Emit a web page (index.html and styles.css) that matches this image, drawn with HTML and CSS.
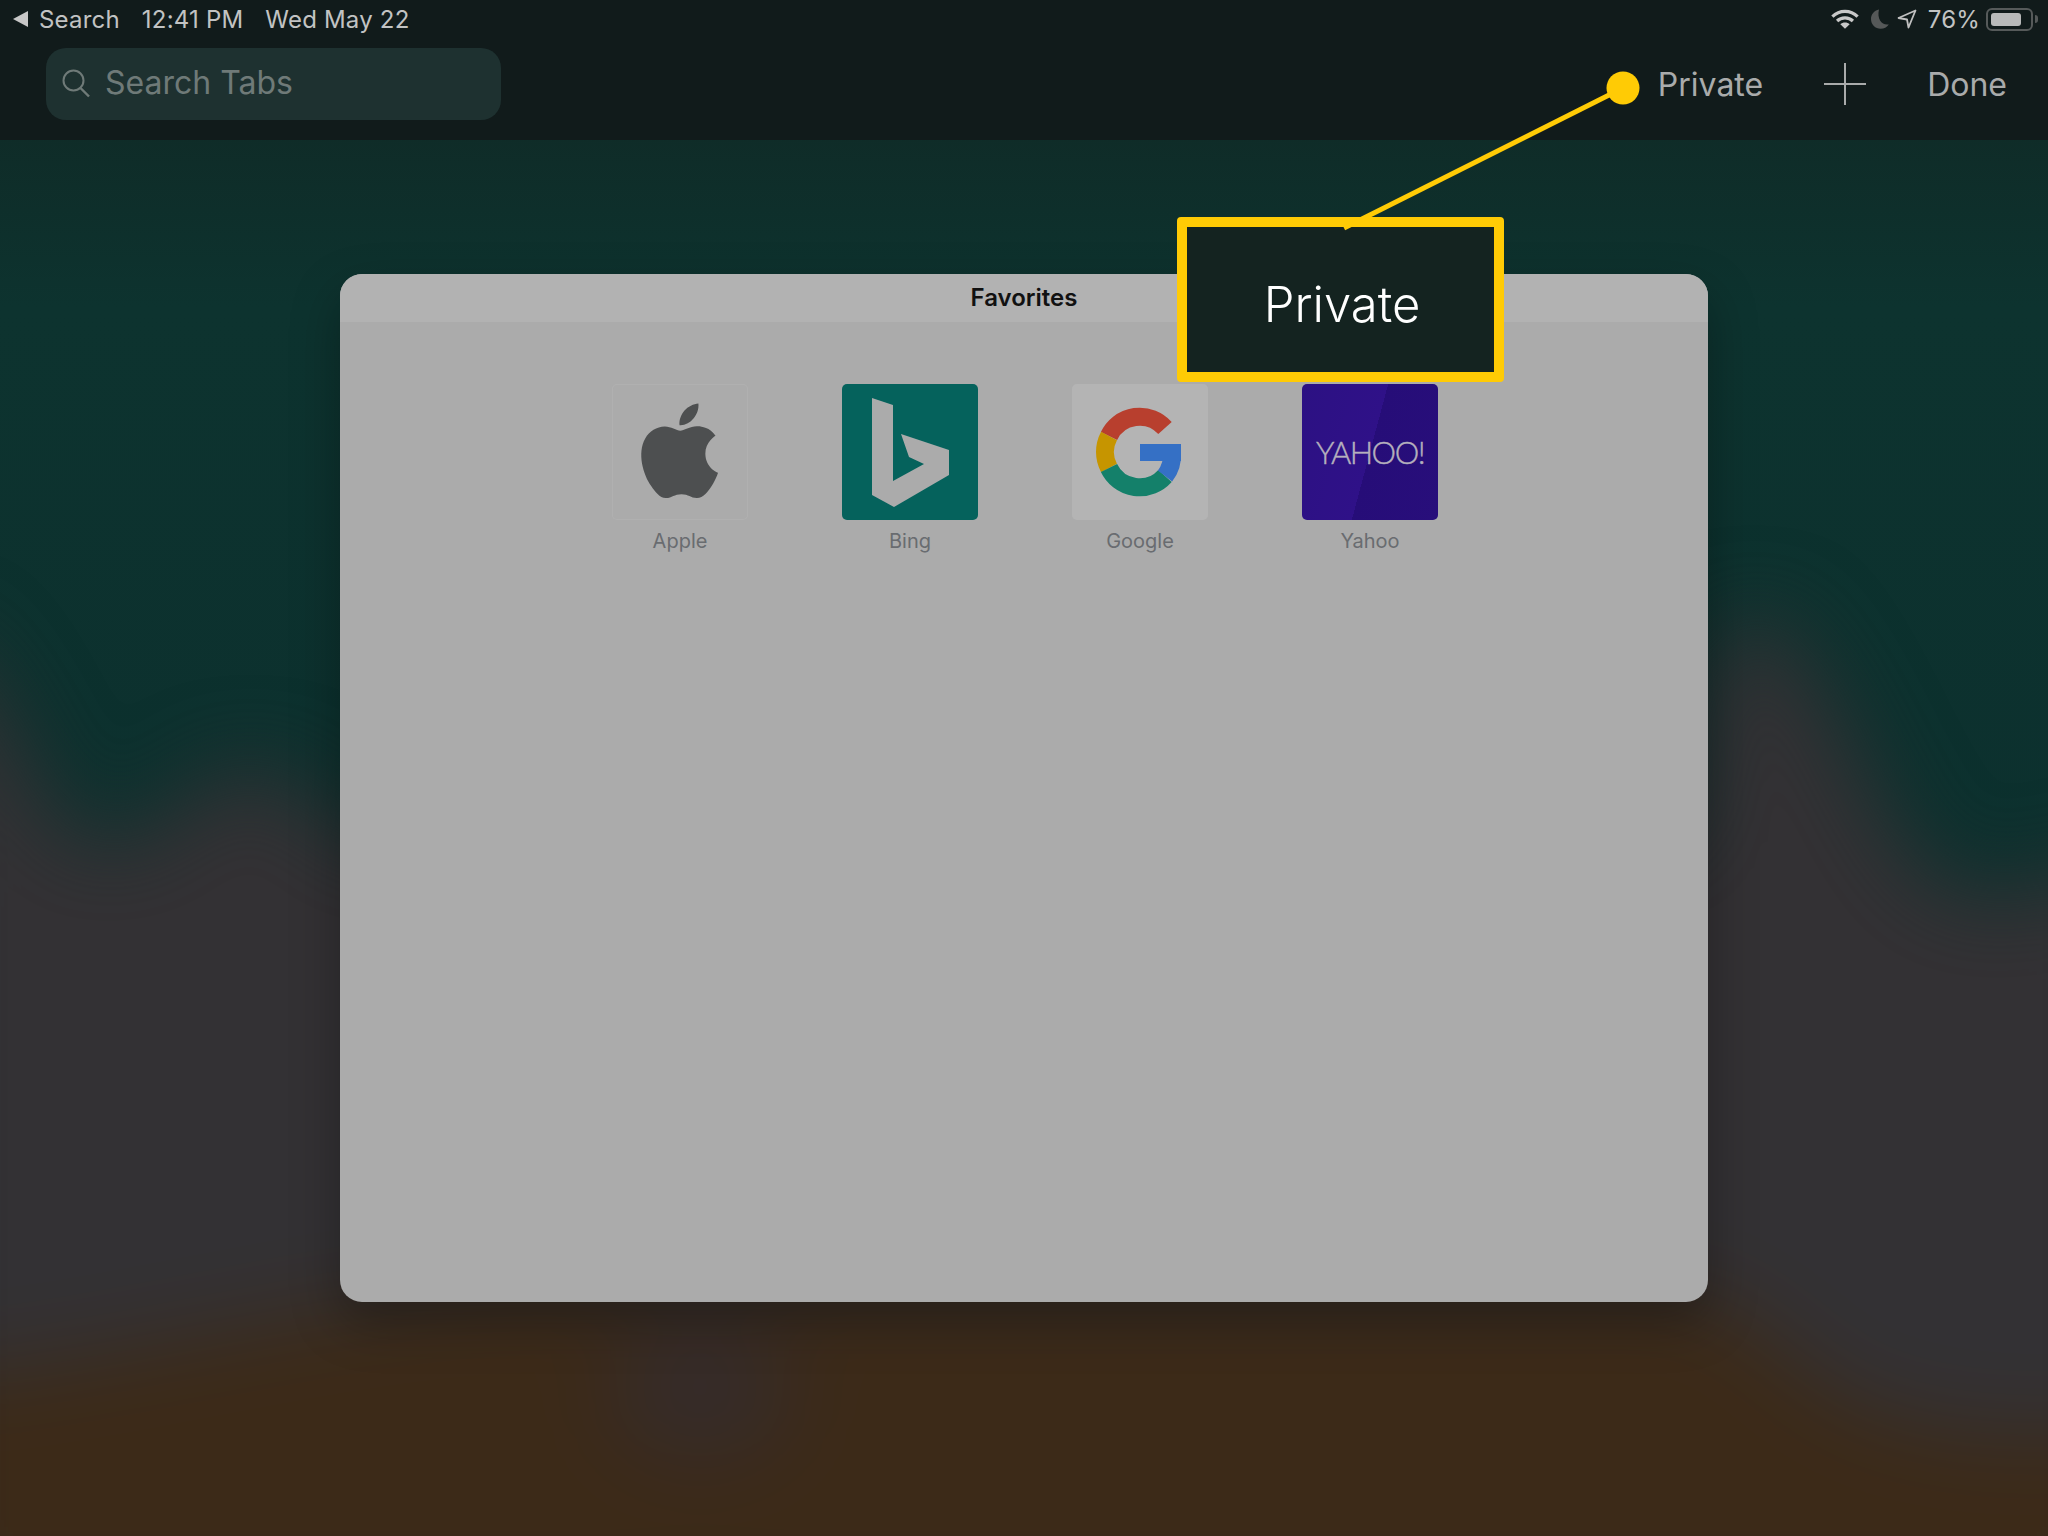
FILE: index.html
```html
<!DOCTYPE html>
<html lang="en">
<head>
    <meta charset="UTF-8">
    <meta name="viewport" content="width=device-width, initial-scale=1.0">
    <title>Safari Tabs</title>
    <link rel="stylesheet" href="styles.css">
</head>
<body>
    <!-- blurred wallpaper behind everything -->
    <svg class="wallpaper" viewBox="0 0 2048 1536" preserveAspectRatio="none">
        <defs>
            <linearGradient id="teal" x1="0" y1="0" x2="0" y2="1">
                <stop offset="0.09" stop-color="#0f2c28"/>
                <stop offset="0.2" stop-color="#0d332f"/>
                <stop offset="0.6" stop-color="#0c302e"/>
            </linearGradient>
            <filter id="soft" x="-10%" y="-10%" width="120%" height="120%" color-interpolation-filters="sRGB">
                <feGaussianBlur stdDeviation="42"/>
            </filter>
        </defs>
        <rect width="2048" height="1536" fill="url(#teal)"/>
        <g filter="url(#soft)">
            <path fill="#333134" d="M-80 630 C 0 650 30 810 90 840 C 160 850 190 770 250 770 C 300 770 320 810 360 840 L 1680 840 C 1700 640 1730 590 1780 630 C 1850 700 1890 870 1960 890 C 2010 905 2050 880 2130 860 L 2130 1600 L -80 1600 Z"/>
            <path fill="#3c2a18" d="M-80 1380 C 150 1360 350 1290 560 1290 L 1660 1290 C 1760 1300 1790 1380 1870 1410 C 1950 1440 2050 1440 2130 1430 L 2130 1620 L -80 1620 Z"/>
            <ellipse cx="700" cy="1390" rx="90" ry="70" fill="#352b2a"/>
        </g>
    </svg>

    <header class="top-bar">
        <div class="status-bar">
            <div class="status-left">
                <span class="back-search"><span class="back-arrow"></span>Search</span>
                <span>12:41 PM</span>
                <span>Wed May 22</span>
            </div>
            <div class="status-right">
                <svg class="wifi-icon" width="28" height="21" viewBox="0 0 30 22">
                    <path d="M1.5 8 C 9 0.5 21 0.5 28.5 8" fill="none" stroke="#c8c8c8" stroke-width="3.4"/>
                    <path d="M6.5 12.6 C 11 8.2 19 8.2 23.5 12.6" fill="none" stroke="#c8c8c8" stroke-width="3.4"/>
                    <path d="M15 21 L 10 16 C 12.5 13.6 17.5 13.6 20 16 Z" fill="#c8c8c8"/>
                </svg>
                <svg class="moon-icon" width="18" height="20" viewBox="0 0 18 20">
                    <path d="M8 0.5 C 3 1.5 0 5.4 0 10 C 0 15.6 4.4 19.8 9.6 19.8 C 13 19.8 16 18.2 17.8 15.4 C 11.4 16.8 5.6 10.4 8 0.5 Z" fill="#555858"/>
                </svg>
                <svg class="arrow-icon" width="20" height="20" viewBox="0 0 20 20">
                    <path d="M18.5 1.5 L 1.5 9 L 10 10.5 L 11.5 18.5 Z" fill="none" stroke="#c0c0c0" stroke-width="1.8" stroke-linejoin="round"/>
                </svg>
                <span class="battery-text">76%</span>
                <span class="battery"><span class="battery-fill"></span></span>
                <span class="battery-nub"></span>
            </div>
        </div>
        <div class="nav-row">
            <div class="search-field">
                <svg class="search-icon" width="30" height="30" viewBox="0 0 30 30">
                    <circle cx="12.5" cy="12.5" r="10" fill="none" stroke="#6f7a78" stroke-width="2"/>
                    <path d="M19.5 20 L 28 28.5" stroke="#6f7a78" stroke-width="2.4"/>
                </svg>
                <span>Search Tabs</span>
            </div>
            <div class="nav-actions">
                <span class="nav-private">Private</span>
                <svg class="plus-icon" width="42" height="42" viewBox="0 0 42 42">
                    <path d="M0 21 H42 M21 0 V42" stroke="#a9abab" stroke-width="2"/>
                </svg>
                <span class="nav-done">Done</span>
            </div>
        </div>
    </header>

    <main class="content">
        <section class="tab-card">
            <div class="tab-title">Favorites</div>
            <div class="favorites">
                <div class="favorite">
                    <div class="tile tile-apple">
                        <svg width="136" height="136" viewBox="0 0 136 136">
                            <g transform="translate(11 10) scale(4.73)">
                                <path fill="#4d4f50" d="M18.71,19.5C17.88,20.74 17,21.95 15.66,21.97C14.32,22 13.89,21.18 12.37,21.18C10.84,21.18 10.37,21.95 9.1,22C7.79,22.05 6.8,20.68 5.96,19.47C4.25,17 2.94,12.45 4.7,9.39C5.57,7.87 7.13,6.91 8.82,6.88C10.1,6.86 11.32,7.75 12.11,7.75C12.89,7.75 14.37,6.68 15.92,6.84C16.57,6.87 18.39,7.1 19.56,8.82C19.47,8.88 17.39,10.1 17.41,12.63C17.44,15.65 20.06,16.66 20.09,16.67C20.06,16.74 19.67,18.11 18.71,19.5M13,3.5C13.73,2.67 14.94,2.04 15.94,2C16.07,3.17 15.6,4.35 14.9,5.19C14.21,6.04 13.07,6.7 11.95,6.61C11.8,5.46 12.36,4.26 13,3.5Z"/>
                            </g>
                        </svg>
                    </div>
                    <span class="tile-label">Apple</span>
                </div>
                <div class="favorite">
                    <div class="tile tile-bing">
                        <svg width="136" height="136" viewBox="0 0 136 136">
                            <path fill="#ababab" d="M30 14 L51 21 L51 97 L82 80 L67 73 L59 50 L107 66 L107 91 L52 123 L30 111 Z"/>
                        </svg>
                    </div>
                    <span class="tile-label">Bing</span>
                </div>
                <div class="favorite">
                    <div class="tile tile-google">
                        <svg width="136" height="136" viewBox="0 0 136 136">
                            <g fill="none" stroke-width="18" transform="translate(1 0)">
                                <path stroke="#b83f2e" d="M92 44 A34 34 0 0 0 36 52"/>
                                <path stroke="#c69500" d="M36 52 A34 34 0 0 0 36 84"/>
                                <path stroke="#14806a" d="M36 84 A34 34 0 0 0 92 92"/>
                                <path stroke="#3570c5" d="M92 92 A34 34 0 0 0 99 69"/>
                            </g>
                            <rect x="68" y="60" width="41" height="17" fill="#3570c5"/>
                        </svg>
                    </div>
                    <span class="tile-label">Google</span>
                </div>
                <div class="favorite">
                    <div class="tile tile-yahoo"><span class="yahoo-word">YAHOO!</span></div>
                    <span class="tile-label">Yahoo</span>
                </div>
            </div>
        </section>
    </main>

    <!-- annotation drawn over the screenshot -->
    <svg class="callout-line" width="2048" height="300" viewBox="0 0 2048 300">
        <path d="M1623 88 L1344 228" stroke="#ffcb05" stroke-width="5"/>
        <circle cx="1623" cy="88" r="16.5" fill="#ffcb05"/>
    </svg>
    <div class="callout">Private</div>
</body>
</html>
```

FILE: styles.css
```css
html, body {
    margin: 0;
    padding: 0;
}
body {
    position: relative;
    width: 2048px;
    height: 1536px;
    overflow: hidden;
    background: #0c302e;
    font-family: 'Inter', 'Liberation Sans', sans-serif;
}
.wallpaper {
    position: absolute;
    left: 0;
    top: 0;
    width: 2048px;
    height: 1536px;
}
.top-bar {
    position: relative;
    height: 140px;
    background: #111b1b;
}
.status-bar {
    display: flex;
    justify-content: space-between;
    align-items: center;
    height: 38px;
    padding: 0 10px 0 13px;
    font-size: 24px;
    letter-spacing: 0.2px;
    color: #c2c3c3;
}
.status-left {
    display: flex;
    align-items: center;
    gap: 22px;
}
.back-search {
    display: flex;
    align-items: center;
    gap: 11px;
}
.back-arrow {
    width: 0;
    height: 0;
    border-top: 8px solid transparent;
    border-bottom: 8px solid transparent;
    border-right: 15px solid #c8c8c8;
}
.status-right {
    display: flex;
    align-items: center;
}
.wifi-icon {
    margin-right: 12px;
}
.moon-icon {
    margin-right: 8px;
}
.arrow-icon {
    margin-right: 11px;
}
.battery-text {
    margin-right: 6px;
}
.battery {
    display: block;
    box-sizing: border-box;
    width: 47px;
    height: 23px;
    padding: 3px;
    border: 2px solid #565a5a;
    border-radius: 6px;
}
.battery-fill {
    display: block;
    width: 30px;
    height: 13px;
    background: #b9baba;
    border-radius: 3px;
}
.battery-nub {
    display: block;
    width: 3px;
    height: 8px;
    margin-left: 2px;
    background: #565a5a;
    border-radius: 0 3px 3px 0;
}
.nav-row {
    display: flex;
    justify-content: space-between;
    align-items: center;
    padding: 10px 41px 0 46px;
}
.search-field {
    display: flex;
    align-items: center;
    gap: 14px;
    box-sizing: border-box;
    width: 455px;
    height: 72px;
    padding: 0 0 3px 15px;
    background: #1e3130;
    border-radius: 20px;
    font-size: 32px;
    color: #6f7a78;
}
.search-icon {
    flex: none;
}
.nav-actions {
    display: flex;
    align-items: center;
    font-size: 32px;
    color: #a9abab;
}
.plus-icon {
    margin: 0 61px 0 61px;
}
.content {
    position: relative;
    display: flex;
    justify-content: center;
    padding-top: 134px;
}
.tab-card {
    width: 1368px;
    height: 1028px;
    background: #ababab;
    border-radius: 22px;
    box-shadow: 0 20px 50px rgba(0, 0, 0, 0.3);
    overflow: hidden;
}
.tab-title {
    height: 48px;
    line-height: 48px;
    background: #b2b2b2;
    text-align: center;
    font-size: 24px;
    font-weight: 600;
    color: #111;
}
.favorites {
    display: flex;
    justify-content: center;
    gap: 94px;
    padding: 62px 0 0 2px;
}
.favorite {
    display: flex;
    flex-direction: column;
    align-items: center;
    width: 136px;
}
.tile {
    width: 136px;
    height: 136px;
    border-radius: 5px;
    overflow: hidden;
}
.tile-apple {
    box-shadow: inset 0 0 0 1px #b0b0b0;
}
.tile-bing {
    background: #05625c;
}
.tile-google {
    background: #b4b4b4;
}
.tile-yahoo {
    display: flex;
    align-items: center;
    justify-content: center;
    background: linear-gradient(105deg, #2c1183 0%, #2f1188 50%, #260d78 50%, #280e7b 100%);
}
.yahoo-word {
    font-family: 'Lato', 'Liberation Sans', sans-serif;
    font-size: 31px;
    font-weight: 300;
    letter-spacing: -1.5px;
    color: #b5b0bd;
    -webkit-text-stroke: 0.4px #b5b0bd;
}
.tile-label {
    margin-top: 9px;
    font-size: 20px;
    line-height: 24px;
    color: #696c70;
}
.callout-line {
    position: absolute;
    left: 0;
    top: 0;
    z-index: 2;
}
.callout {
    position: absolute;
    left: 1177px;
    top: 217px;
    z-index: 1;
    box-sizing: border-box;
    width: 327px;
    height: 165px;
    padding: 5px 0 0 3px;
    border: 10px solid #ffcb05;
    border-radius: 4px;
    background: #142320;
    color: #fff;
    font-size: 49px;
    font-weight: 300;
    line-height: 145px;
    text-align: center;
}
```
